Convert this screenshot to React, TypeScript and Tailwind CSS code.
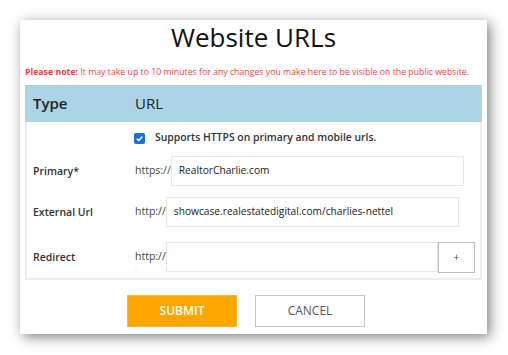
import React from "react";

const font = { fontFamily: '"Open Sans", "Noto Sans", sans-serif' };

interface UrlRowProps {
  label: string;
  prefix: string;
  value?: string;
  inputClass: string;
  withAdd?: boolean;
}

function UrlRow({ label, prefix, value, inputClass, withAdd }: UrlRowProps) {
  return (
    <div className="flex items-center h-[30px]">
      <span className="w-[108px] pl-[6px] pt-[2px] text-[10.5px] font-semibold text-[#333]">
        {label}
      </span>
      <span className="text-[10.5px] text-[#444]">{prefix}</span>
      <div
        className={`h-[30px] border-[1.5px] border-[#e8e8e8] flex items-center pl-[7px] text-[10.2px] text-[#222] whitespace-nowrap ${inputClass}`}
      >
        {value}
      </div>
      {withAdd && (
        <div className="h-[31px] w-[37px] border border-[#bdbdbd] flex items-center justify-center text-[11px] text-[#555]">
          +
        </div>
      )}
    </div>
  );
}

export default function App() {
  return (
    <div className="w-[508px] h-[355px] bg-white pt-[20px] pl-[20px]" style={font}>
      <div className="w-[467px] h-[314px] bg-white shadow-[3px_3px_12px_rgba(0,0,0,0.5)] px-[5px] flex flex-col">
        <h1 className="mt-[4px] text-center text-[26px] leading-[26px] text-[#111]">
          Website URLs
        </h1>
        <p className="mt-[16px] text-[8.75px] leading-[13px] text-[#ff3b3b] whitespace-nowrap">
          <span className="font-bold">Please note:</span> It may take up to 10 minutes for
          any changes you make here to be visible on the public website.
        </p>
        <div className="mt-[6px] h-[37px] bg-[#acd3e6] flex items-center">
          <span className="w-[110px] pl-[8px] text-[15px] font-semibold text-[#222]">Type</span>
          <span className="text-[15px] text-[#222]">URL</span>
        </div>
        <div className="border-2 border-t-0 border-[#ededed] pt-[8px] pb-[6px] flex flex-col">
          <div className="flex items-center h-[16px] pl-[107px]">
            <span className="w-[11px] h-[11px] rounded-[2px] bg-[#1a6fe0] flex items-center justify-center">
              <svg width="9" height="9" viewBox="0 0 10 10">
                <path d="M2 5.2 L4.2 7.3 L8.2 2.8" fill="none" stroke="white" strokeWidth="1.6" />
              </svg>
            </span>
            <span className="ml-[10px] text-[10.4px] font-semibold text-[#333] whitespace-nowrap">
              Supports HTTPS on primary and mobile urls.
            </span>
          </div>
          <div className="mt-[10px]">
            <UrlRow label="Primary*" prefix="https://" value="RealtorCharlie.com" inputClass="w-[293px]" />
          </div>
          <div className="mt-[11px]">
            <UrlRow
              label="External Url"
              prefix="http://"
              value="showcase.realestatedigital.com/charlies-nettel"
              inputClass="w-[293px]"
            />
          </div>
          <div className="mt-[15px]">
            <UrlRow label="Redirect" prefix="http://" inputClass="w-[272px]" withAdd />
          </div>
        </div>
        <div className="mt-[15px] flex pl-[102px] gap-[18px]">
          <button className="w-[110px] h-[32px] bg-[#ffa500] border border-[#ffb733] text-white text-[12px] font-semibold">
            SUBMIT
          </button>
          <button className="w-[110px] h-[32px] bg-white border border-[#c4c4c4] text-[#555] text-[12px]">
            CANCEL
          </button>
        </div>
      </div>
    </div>
  );
}
